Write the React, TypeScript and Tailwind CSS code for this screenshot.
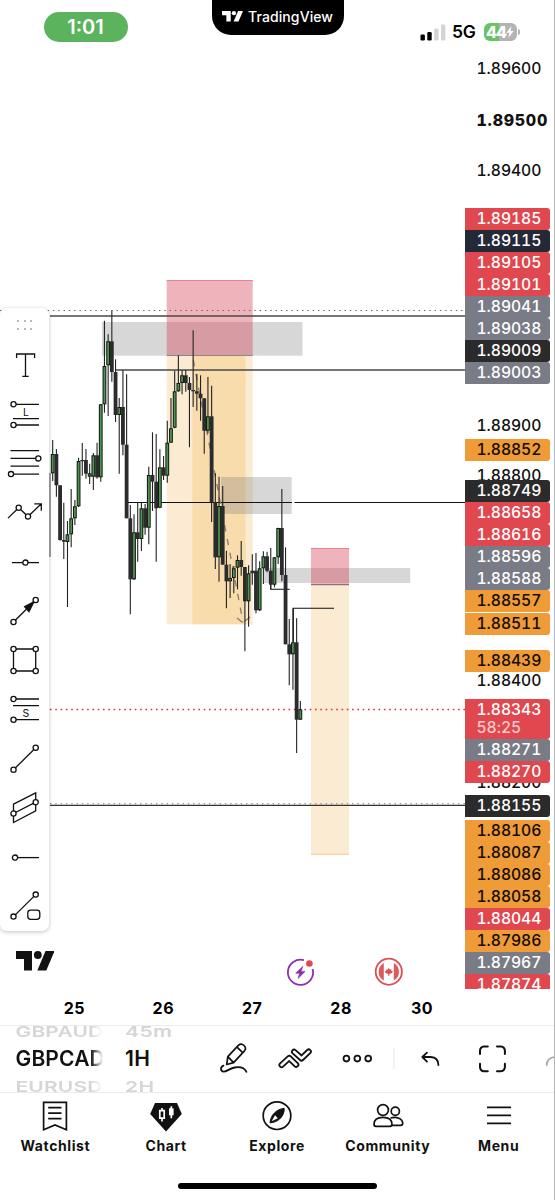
import type { ReactNode } from 'react'
import clsx from 'clsx'

type Candle = [high: number, top: number, bottom: number, low: number, up: 0 | 1]

const FIRST_X = 52.7
const STEP = 3.696

const candles: Candle[] = [
  [440, 454, 473.3, 481, 1], [449, 454, 485.3, 496.7, 0], [485.3, 485.3, 540, 540.7, 0], [502.7, 540, 541.7, 559, 0],
  [521, 534.3, 542, 607, 1], [489, 518.3, 534.3, 547.3, 1], [500, 506.3, 518.3, 525, 1], [457.7, 461, 506.3, 507, 1],
  [443, 460, 461, 475.7, 0], [449, 460, 473.7, 478.7, 0], [463.7, 473.3, 476.7, 484, 1], [453, 455.3, 476.7, 490, 1],
  [442.7, 455.3, 477.3, 478.7, 0], [404, 404.3, 477.3, 481.7, 1], [320.7, 366, 404.3, 412.7, 1], [334.3, 341.3, 365.3, 416, 1],
  [310.7, 341.3, 372, 381.7, 0], [359.3, 372, 415, 422, 0], [398, 407, 415, 473.7, 1], [370, 407, 444.7, 455.3, 0],
  [374.3, 444.7, 518.3, 518.3, 0], [505, 518.3, 579.3, 614.3, 0], [514.3, 532.3, 579.3, 580, 1], [502.7, 532.3, 539, 561.7, 0],
  [502.7, 508.3, 539, 551, 1], [504, 508.3, 527.7, 534.7, 0], [466.7, 475, 527.7, 544.3, 1], [432.3, 475, 481.7, 511, 0],
  [434, 481.7, 508.3, 561.7, 0], [449.3, 467.3, 507.7, 508.3, 1], [456, 467.3, 475.7, 480, 0], [420.7, 442.7, 475.7, 482.7, 1],
  [398, 428.3, 442.7, 442.7, 1], [370.7, 391.3, 427.7, 428.3, 1], [355.3, 383, 391.3, 391.7, 1], [370, 375.3, 383, 394.3, 1],
  [370, 375.3, 383, 391.7, 0], [377, 383, 390, 447.3, 0], [330.3, 390, 391.3, 407, 0], [374, 391.3, 393.7, 410.7, 0],
  [375.3, 393.7, 398.3, 420.7, 0], [398.3, 398.3, 430.7, 453.7, 0], [377, 416.3, 430.7, 433.3, 1], [385.7, 416.3, 502.3, 522, 0],
  [473.3, 502.3, 557.3, 569, 0], [476.7, 506, 557.3, 581.7, 1], [486, 506, 564.7, 564.7, 0], [550.7, 564.7, 581.3, 608.3, 0],
  [564, 578, 581.3, 598, 1], [566, 568.3, 578, 593.3, 1], [555.3, 560, 567.7, 589.3, 1], [541, 560, 567, 575.7, 0],
  [567, 567, 601.3, 651.3, 0], [565.3, 573.3, 601.3, 626.7, 1], [554.3, 570.7, 573.3, 584.7, 0], [553, 570.7, 610.3, 613.3, 0],
  [561.3, 568.3, 610.3, 611, 1], [551.3, 556.3, 568.3, 584, 1], [551.7, 556.3, 570.7, 572.3, 0], [548, 570.7, 584.7, 589.3, 0],
  [557, 557.3, 584.7, 587.3, 1], [527.7, 528, 557.3, 564, 1], [489, 528, 575, 581.3, 0], [547.3, 575, 644.3, 644.3, 0],
  [619, 644.3, 654.3, 685.3, 0], [608.3, 642.3, 654.3, 689.7, 1], [618.3, 642.3, 719.7, 753, 0], [701, 709.3, 719.7, 720, 1],
]

const tone = {
  plain: 'text-[#111] relative z-0',
  red: 'bg-[#e0474e] text-white relative z-10',
  navy: 'bg-[#242938] text-white relative z-10',
  gray: 'bg-[#797b86] text-white relative z-10',
  dark: 'bg-[#2b2b2b] text-white relative z-10',
  orange: 'bg-[#ee9b38] text-[#140c02] relative z-10',
}

// gap is the distance to the tag above
const prices: { value: string; kind: keyof typeof tone; gap?: string; timer?: string; bold?: boolean }[] = [
  { value: '1.89600', kind: 'plain', gap: 'mt-[10px]' },
  { value: '1.89500', kind: 'plain', gap: 'mt-[29px]', bold: true },
  { value: '1.89400', kind: 'plain', gap: 'mt-[29px]' },
  { value: '1.89185', kind: 'red', gap: 'mt-[26px]' },
  { value: '1.89115', kind: 'navy' },
  { value: '1.89105', kind: 'red' },
  { value: '1.89101', kind: 'red' },
  { value: '1.89041', kind: 'gray' },
  { value: '1.89038', kind: 'gray' },
  { value: '1.89009', kind: 'dark' },
  { value: '1.89003', kind: 'gray' },
  { value: '1.88900', kind: 'plain', gap: 'mt-[30.5px]' },
  { value: '1.88852', kind: 'orange', gap: 'mt-[2.5px]' },
  { value: '1.88800', kind: 'plain', gap: 'mt-[4px]' },
  { value: '1.88749', kind: 'dark', gap: '-mt-[7.5px]' },
  { value: '1.88658', kind: 'red' },
  { value: '1.88616', kind: 'red' },
  { value: '1.88596', kind: 'gray' },
  { value: '1.88588', kind: 'gray' },
  { value: '1.88557', kind: 'orange' },
  { value: '1.88511', kind: 'orange', gap: 'mt-[1.2px]' },
  { value: '1.88439', kind: 'orange', gap: 'mt-[15px]' },
  { value: '1.88400', kind: 'plain', gap: '-mt-[2.5px]' },
  { value: '1.88343', kind: 'red', gap: 'mt-[7.3px]', timer: '58:25' },
  { value: '1.88271', kind: 'gray' },
  { value: '1.88270', kind: 'red' },
  { value: '1.88200', kind: 'plain', gap: '-mt-[11px]' },
  { value: '1.88155', kind: 'dark', gap: 'mt-[0.8px]' },
  { value: '1.88106', kind: 'orange', gap: 'mt-[3px]' },
  { value: '1.88087', kind: 'orange' },
  { value: '1.88086', kind: 'orange' },
  { value: '1.88058', kind: 'orange' },
  { value: '1.88044', kind: 'red' },
  { value: '1.87986', kind: 'orange' },
  { value: '1.87967', kind: 'gray' },
  { value: '1.87874', kind: 'red' },
]

function Logo({ className }: { className: string }) {
  return (
    <svg viewBox="0 0 38.5 19.6" preserveAspectRatio="none" fill="currentColor" className={className}>
      <path d="M0 0h16v19.6H8V8H0z" />
      <circle cx="21.8" cy="4" r="3.9" />
      <path d="M29.5 0h9l-8.2 19.6h-9z" />
    </svg>
  )
}

function StatusBar() {
  return (
    <header className="flex h-12 shrink-0 items-start">
      <div className="mt-3 ml-[43.5px] flex h-[29.5px] w-[84px] items-center justify-center rounded-full bg-[#5cb35d] text-[20px] font-semibold text-white">
        1:01
      </div>
      <div className="ml-[84px] flex h-[35px] w-[132px] items-center gap-[5px] rounded-b-[19px] bg-black pb-[2px] pl-[10.5px] text-white">
        <Logo className="h-[10.5px] w-[21px] shrink-0" />
        <span className="text-[14px] font-medium tracking-[0.1px]">TradingView</span>
      </div>
      <div className="mt-[22px] ml-[76px] flex h-[20px] items-center">
        <svg width="26" height="17" viewBox="0 0 26 17">
          <rect x="0.5" y="10.5" width="4.4" height="6" rx="1.3" fill="#000" />
          <rect x="7.3" y="8" width="4.4" height="8.5" rx="1.3" fill="#000" />
          <rect x="14.2" y="4.5" width="4.4" height="12" rx="1.3" fill="#d4d4d4" />
          <rect x="21" y="0.5" width="4.4" height="16" rx="1.3" fill="#d4d4d4" />
        </svg>
        <span className="ml-[6.5px] w-[24.5px] text-[17.5px] font-semibold tracking-[-0.2px]">5G</span>
        <div className="ml-[7px] flex h-[18px] w-[33px] items-center overflow-hidden rounded-[6px] bg-[linear-gradient(to_right,#66c465_45%,#b4b4b6_45%)] pl-[2.5px] text-white">
          <span className="text-[16px] font-extrabold tracking-[-0.9px]">44</span>
          <svg width="8" height="12" viewBox="0 0 8 12" fill="currentColor">
            <path d="M5.4 0 .4 6.8h3L2.4 12l5.2-7H4.5z" />
          </svg>
        </div>
        <div className="ml-px h-[6px] w-[2px] rounded-r-full bg-[#b4b4b6]" />
      </div>
    </header>
  )
}

function Chart() {
  return (
    <svg viewBox="0 48 465 941" className="h-[941px] w-[465px] shrink-0">
      {/* supply zones */}
      <g fill="#7a7a7a" fillOpacity="0.3">
        <rect x="102" y="322" width="200.5" height="33.7" />
        <rect x="263.7" y="568" width="146.5" height="15" />
      </g>

      {/* short positions */}
      <rect x="166.7" y="355.3" width="86" height="269" fill="#faebd2" />
      <rect x="192.3" y="355.3" width="53.2" height="269" fill="#f8dcab" />
      <rect x="166.7" y="280" width="86" height="75.3" fill="#d84454" fillOpacity="0.4" />
      <path d="M166.7 280.5h86" stroke="#e5848b" />
      <path d="M166.7 355.5h86" stroke="#8f858a" />
      <rect x="311" y="585" width="38" height="269.7" fill="#faebd2" />
      <rect x="311" y="548" width="38" height="36.7" fill="#d84454" fillOpacity="0.4" />
      <path d="M311 548.5h38" stroke="#e5848b" />
      <path d="M311 584.7h38" stroke="#6d6365" />
      <path d="M311 854.3h38" stroke="#f2c583" strokeWidth="0.8" />
      <rect x="221" y="477" width="70.7" height="37" fill="#7a7a7a" fillOpacity="0.3" />

      {/* levels */}
      <path d="M0 310.5H465" stroke="#666" strokeWidth="1.1" strokeDasharray="1.4 3.9" />
      <path d="M50 316H465M116 370H465" stroke="#4a4a4a" strokeWidth="1.6" />
      <path d="M128 502.5H292M294.5 502.5H465" stroke="#111" strokeWidth="1.2" />
      <path d="M50 805.4H465" stroke="#333" strokeWidth="1.4" />
      <path d="M50 803.7H465" stroke="#777" strokeWidth="1.1" strokeDasharray="1.4 3.9" />
      <path d="M50 709.5H465" stroke="#d3323f" strokeWidth="1.3" strokeDasharray="1.6 3.7" />
      <path d="M270.7 584v5.3h19M293.3 642v-33.7h40.7" fill="none" stroke="#111" strokeWidth="1.1" />

      {/* projected path */}
      <path d="M193.3 360 243 622" stroke="#857c77" strokeWidth="1.3" strokeDasharray="6.5 7.5" />
      <path d="m237 618 5.5 4.5M245 621l5-4" stroke="#857c77" strokeWidth="1.3" />

      <path d="M50 473v84" stroke="#444" />
      {candles.map(([high, top, bottom, low, up], i) => {
        const x = FIRST_X + i * STEP
        return (
          <g key={i}>
            <path d={`M${x} ${high}V${low}`} stroke="#222" strokeWidth="1.1" />
            <rect x={x - 1.9} y={top} width="3.8" height={Math.max(bottom - top, 1.2)} fill={up ? '#101810' : '#2b2b2d'} />
            {up === 1 && bottom - top > 2.5 && (
              <rect x={x - 0.9} y={top + 1} width="1.8" height={bottom - top - 2} fill="#4f9450" />
            )}
          </g>
        )
      })}

      {/* calendar events */}
      <g transform="translate(300.4 972.3)">
        <path d="M3.5-12.1a12.6 12.6 0 1 0 8.7 8.7" fill="none" stroke="#8a2fb0" strokeWidth="1.8" />
        <path d="M2.5-6-4.7.9h3.9L-2.4 6.2 4.7-.9H.6z" fill="#8a2fb0" stroke="#8a2fb0" strokeWidth="0.6" strokeLinejoin="round" />
        <circle cx="9" cy="-8.8" r="3.3" fill="#e0474e" />
      </g>
      <g transform="translate(388.8 971.7)">
        <circle r="13.1" fill="#fff" stroke="#dc4f54" strokeWidth="1.8" />
        <path d="M-5-8.8v17.6a10.1 10.1 0 0 1 0-17.6zM5-8.8v17.6a10.1 10.1 0 0 0 0-17.6z" fill="#dc5a5c" />
        <path d="m0-4 1.2 2 1.3-.6v1.8L4.2-.5 3 1.6.6 2.1V4h-1.2V2.1L-3 1.6-4.2-.5l1.7-.3v-1.8l1.3.6z" fill="#dc4f54" />
      </g>
    </svg>
  )
}

function PriceAxis() {
  return (
    <div className="flex h-[941px] flex-1 flex-col overflow-hidden font-medium tabular-nums">
      {prices.map(({ value, kind, gap, timer, bold }) => (
        <div
          key={value}
          className={clsx(
            'w-[84.5px] shrink-0 rounded-r-[3px] pl-[11.5px] leading-[22px]',
            timer ? 'h-[40.5px]' : 'h-[22.02px]',
            bold ? 'text-[16px] font-extrabold tracking-[0.75px]' : 'text-[15.7px] tracking-[-0.05px]',
            tone[kind],
            gap,
          )}
        >
          {value}
          {timer && <div className="-mt-[3.5px] text-[#fbc9cb]">{timer}</div>}
        </div>
      ))}
    </div>
  )
}

const Dot = ({ x, y }: { x: number; y: number }) => <circle cx={x} cy={y} r="2.6" fill="#fff" />

const drawTools: ReactNode[] = [
  <path d="M16.6-7.6v-4h18v4M25.5-11.5v22.2M22.3 10.7h6.4" />,
  <>
    <path d="M13.5-10.3H39M13 4h26M13.5 10.4H39" />
    <Dot x={13.5} y={-10.3} />
    <Dot x={13.5} y={10.4} />
    <text x="23" y="1" fontSize="10.5" fill="#111" stroke="none">L</text>
  </>,
  <>
    <path d="M10.5-12.9H39M10.5-5.2H39M10.5 2.5H39M11 10.5h28" />
    <Dot x={38.3} y={-5.2} />
    <Dot x={11} y={10.5} />
  </>,
  <>
    <path d="m8 5.5 10.7-10.4L28 3.9 41.3-8.8M34.3-8.8h7v7" />
    <Dot x={18.7} y={-4.9} />
    <Dot x={28} y={3.9} />
  </>,
  <>
    <path d="M12 0h27" />
    <Dot x={25.4} y={0} />
  </>,
  <>
    <path d="M13.5 10.4 35.7-11.6" />
    <path d="M33.8-9.7 24.6-5l4.4 5z" fill="#111" />
    <Dot x={13.5} y={10.4} />
    <Dot x={35.7} y={-11.6} />
  </>,
  <>
    <path d="M13.5-11.6h22.2v22H13.5z" />
    <Dot x={13.5} y={-11.6} />
    <Dot x={35.7} y={-11.6} />
    <Dot x={13.5} y={10.4} />
    <Dot x={35.7} y={10.4} />
  </>,
  <>
    <path d="M13.5-10.6H39M13-4h26M13.5 10.1H39" />
    <Dot x={13.5} y={-10.6} />
    <Dot x={13.5} y={10.1} />
    <text x="22.5" y="7.2" fontSize="10.5" fill="#111" stroke="none">S</text>
  </>,
  <>
    <path d="M13.5 10.2 35.7-11.8" />
    <Dot x={13.5} y={10.2} />
    <Dot x={35.7} y={-11.8} />
  </>,
  <>
    <path d="m13.5-4.4 22.2-11.3V2.3L13.5 13.9zM13.5 4.9 35.7-6.4" />
    <Dot x={13.5} y={4.9} />
    <Dot x={35.7} y={-6.4} />
  </>,
  <>
    <path d="M15 0h24" />
    <Dot x={15} y={0} />
  </>,
  <>
    <path d="M13.5 10 35.7-12" />
    <Dot x={13.5} y={10} />
    <Dot x={35.7} y={-12} />
    <rect x="27.8" y="3.5" width="12" height="9.2" rx="2.8" fill="#fff" />
  </>,
]

function DrawingToolbar() {
  return (
    <div className="absolute top-[308px] left-0 flex h-[623px] w-[49px] flex-col rounded-[7px] bg-white shadow-[0_1px_4px_rgba(0,0,0,0.24)]">
      <div className="mt-[12px] ml-[17px] grid h-[10px] w-[15px] grid-cols-3 gap-x-[4.5px] gap-y-[5.5px]">
        {[0, 1, 2, 3, 4, 5].map(i => (
          <span key={i} className="size-[2px] rounded-full bg-[#a3a3a3]" />
        ))}
      </div>
      <div className="mt-[11px] flex flex-col">
        {drawTools.map((tool, i) => (
          <svg
            key={i}
            viewBox="0 -24.6 49 49.27"
            className="h-[49.27px] w-[49px] overflow-visible"
            fill="none"
            stroke="#111"
            strokeWidth="1.3"
          >
            {tool}
          </svg>
        ))}
      </div>
    </div>
  )
}

function Wheel({ items, className }: { items: string[]; className: string }) {
  return (
    <div className={clsx('flex h-full shrink-0 flex-col justify-center overflow-hidden whitespace-nowrap text-[21px] font-semibold', className)}>
      <span className="origin-left translate-y-[0.5px] scale-y-[0.72] leading-[28px] text-[#d6d6d6]">{items[0]}</span>
      <span className="leading-[28px] text-[#111]">{items[1]}</span>
      <span className="origin-left scale-y-[0.72] leading-[28px] text-[#d6d6d6]">{items[2]}</span>
    </div>
  )
}

function ChartToolbar() {
  return (
    <div className="flex h-[68px] shrink-0 items-center overflow-hidden border-y border-[#ececec]">
      <Wheel
        items={['GBPAUD', 'GBPCAD', 'EURUSD']}
        className="ml-[15.5px] w-[87.5px] tracking-[0.15px] [mask-image:linear-gradient(to_right,#000_86%,transparent)]"
      />
      <Wheel items={['45m', '1H', '2H']} className="ml-[22px] w-[60px] tracking-[0.4px]" />
      <svg viewBox="185 1025 370 68" className="h-[68px] w-[370px] shrink-0" fill="none" stroke="#111" strokeWidth="1.8" strokeLinecap="round" strokeLinejoin="round">
        <g transform="translate(220 1043)">
          <path d="M6.7 21.5 7.8 13.6 18.6 2.2c1.9-1.7 3.8-1.3 5.4.3 1.7 1.7 2 3.5.5 5.3L13.6 19.6zM7.8 13.6l5.8 6M17 4.2l5.7 5.4" strokeWidth="1.7" />
          <path d="M3.5 22.6c-3.3 1.2-3.4 6 .3 6.1 3.4 0 4.9-3.2 10.8-4.2 6-1 10.2 1 11.8 4.3" />
        </g>
        <path d="M281.6 1065 289.2 1058l7 6.7" strokeWidth="6.2" />
        <path d="M281.6 1065 289.2 1058l7 6.7" stroke="#fff" strokeWidth="2.6" />
        <path d="m294.1 1051.8 7.4 6.6 7.2-6.8" strokeWidth="6.2" />
        <path d="m294.1 1051.8 7.4 6.6 7.2-6.8" stroke="#fff" strokeWidth="2.6" />
        <circle cx="346.4" cy="1058.6" r="2.9" />
        <circle cx="357.3" cy="1058.6" r="2.9" />
        <circle cx="368.2" cy="1058.6" r="2.9" />
        <path d="M394 1048.5v20" stroke="#ececec" strokeWidth="1.2" />
        <path d="M427 1052.7l-4.7 4.3 4.7 4.7M422.7 1057h8q7.6.4 7.7 8" />
        <path d="M480 1054v-3.4q.2-4 4-4.2h3.8M497 1046.4h4q3.6.3 3.9 4.2v3.4M504.9 1063.7v3.4q-.3 3.8-4 4.2h-3.9M487.8 1071.3H484q-3.8-.4-4-4.2v-3.4" strokeWidth="2" />
        <path d="M546.7 1065q.3-7.2 7.7-8" stroke="#aaa" />
      </svg>
    </div>
  )
}

const tabs: { label: string; icon: ReactNode }[] = [
  {
    label: 'Watchlist',
    icon: (
      <>
        <path d="M4.6 2.4h22.8v27.3L16 24.9 4.6 29.7z" />
        <path d="M9.2 7.7h13.3M9.2 13.2h13.3M9.2 18.7h13.3" />
      </>
    ),
  },
  {
    label: 'Chart',
    icon: (
      <>
        <path d="M5 3h22l4.8 11L16 31.5.2 14z" fill="#111" stroke="none" />
        <path d="M12 8v3M12 18.5v3M21.3 6.3v3M21.3 15v3.3" stroke="#fff" />
        <path d="M9.8 10.7h4.4v7.4H9.8z" stroke="#fff" />
        <path d="M19 8.3h4.6v7H19z" fill="#fff" stroke="none" />
      </>
    ),
  },
  {
    label: 'Explore',
    icon: (
      <>
        <circle cx="16" cy="15.7" r="13.8" />
        <path d="M23.2 8.4c.3 3.8-1.6 8-4.6 10.7-2.4 2.1-6 3.6-9.6 3.7.4-3.7 1.7-7.1 4.3-9.7 2.6-2.7 6.2-4.6 9.9-4.7z" fill="#111" strokeWidth="1" />
        <path d="M10.6 21.3 14 15.2l2.9 3z" fill="#fff" stroke="none" />
      </>
    ),
  },
  {
    label: 'Community',
    icon: (
      <>
        <circle cx="11" cy="10" r="5.4" />
        <circle cx="23.3" cy="11.2" r="4.1" />
        <path d="M2 24.3c0-4.6 3.6-7 9-7s9 2.4 9 7q0 2-2 2H4q-2 0-2-2z" />
        <path d="M18.5 18c6-1.8 12.2.5 12.2 5.3 0 1.3-.7 2-2 2H20" />
      </>
    ),
  },
  { label: 'Menu', icon: <path d="M4 7.4h24M4 15.4h24M4 23.4h24" /> },
]

function TabBar() {
  return (
    <nav className="flex flex-1 flex-col items-center">
      <div className="grid w-full grid-cols-5 pt-[7px]">
        {tabs.map(({ label, icon }) => (
          <div key={label} className="flex flex-col items-center">
            <svg width="32" height="32" viewBox="0 0 32 32" className="overflow-visible" fill="none" stroke="#111" strokeWidth="1.7">
              {icon}
            </svg>
            <span className="mt-[3.5px] text-[14px] leading-[20px] font-bold tracking-[0.6px] text-[#111]">{label}</span>
          </div>
        ))}
      </div>
      <div className="mt-[27.5px] h-[6px] w-[199px] rounded-full bg-black" />
    </nav>
  )
}

export default function App() {
  return (
    <div className="relative flex h-[1200px] w-[555px] flex-col overflow-hidden border-r border-[#b5b5b5] bg-white font-['Inter','Liberation_Sans',sans-serif] text-black">
      <StatusBar />
      <div className="flex">
        <Chart />
        <PriceAxis />
      </div>
      <div className="flex h-9 shrink-0 items-center pt-[2px] pl-[30px] text-[16px] font-bold">
        {['25', '26', '27', '28'].map(day => (
          <span key={day} className="w-[88.9px] text-center tracking-[0.5px]">{day}</span>
        ))}
        <span className="w-[73px] text-center tracking-[0.5px]">30</span>
      </div>
      <ChartToolbar />
      <TabBar />
      <DrawingToolbar />
      <Logo className="absolute top-[951px] left-[15.6px] h-[19.6px] w-[38.5px] text-[#111]" />
    </div>
  )
}
